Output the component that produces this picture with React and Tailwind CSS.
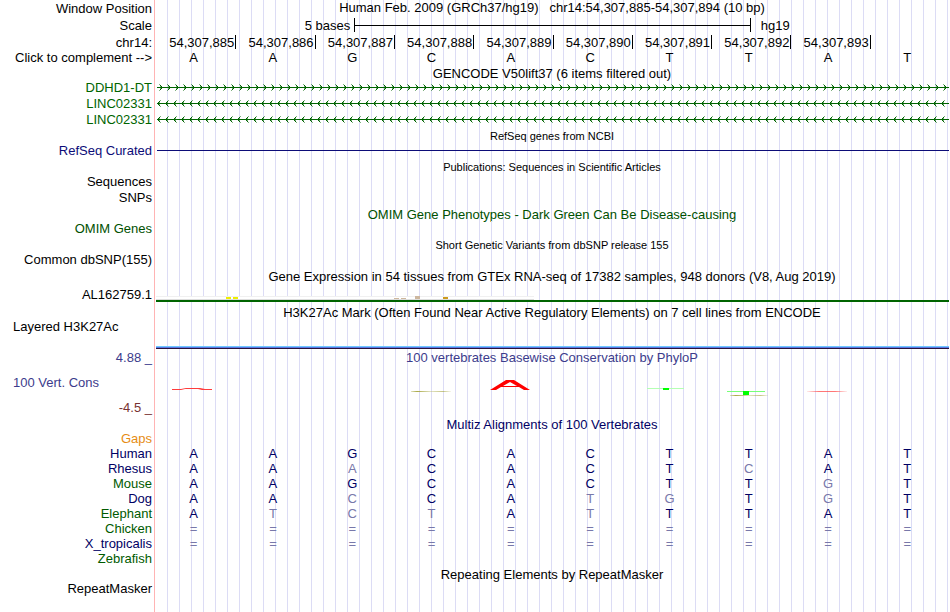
import React from "react";

const POSITIONS = [
  "54,307,885",
  "54,307,886",
  "54,307,887",
  "54,307,888",
  "54,307,889",
  "54,307,890",
  "54,307,891",
  "54,307,892",
  "54,307,893",
];

// lower case = base differs from human, drawn lighter
const SPECIES = [
  { name: "Human", color: "text-[#000064]", bases: "AAGCACTTAT" },
  { name: "Rhesus", color: "text-[#000064]", bases: "AAaCACTcAT" },
  { name: "Mouse", color: "text-[#005a00]", bases: "AAGCACTTgT" },
  { name: "Dog", color: "text-[#000064]", bases: "AAcCAtgTgT" },
  { name: "Elephant", color: "text-[#005a00]", bases: "AtctAtTTAT" },
  { name: "Chicken", color: "text-[#005a00]", bases: "==========" },
  { name: "X_tropicalis", color: "text-[#000064]", bases: "==========" },
];

/* One browser line: label on the left, track area on the right */
const Row = ({ label, color = "text-black", height, children }) => (
  <div className={`flex ${height}`}>
    <div className={`w-[154px] shrink-0 pr-0.5 text-right ${color}`}>
      {label}
    </div>
    <div className="min-w-0 flex-1 border-l border-[#ffb4b4] pl-px">
      <div className="h-full bg-[repeating-linear-gradient(to_right,transparent_0_11px,#dcdcf5_11px_12px)]">
        {children}
      </div>
    </div>
  </div>
);

const Title = ({ children, color = "text-black", size = "text-[13px]", height }) => (
  <Row height={height}>
    <h2 className={`pr-0.5 text-center leading-4 ${size} ${color}`}>{children}</h2>
  </Row>
);

const Bases = ({ bases, color = "text-black" }) => (
  <div className="grid grid-cols-10 pl-px">
    {bases.split("").map((b, i) => (
      <span
        key={i}
        className={`pr-1.5 text-center ${
          b === b.toUpperCase() && b !== "=" ? color : "text-[#7878aa]"
        }`}
      >
        {b.toUpperCase()}
      </span>
    ))}
  </div>
);

/* Intron line with strand chevrons every 8px */
const Strand = ({ id, reverse }) => (
  <svg className="block h-[15px] w-full px-px" shapeRendering="crispEdges">
    <defs>
      <pattern id={id} width="8" height="15" patternUnits="userSpaceOnUse">
        {reverse ? (
          <>
            <path d="M0 7h1v1h-1zM1 6h1v1h-1zM1 8h1v1h-1zM2 5h1v1h-1zM2 9h1v1h-1z" fill="#006400" />
            <path d="M3 4h1v1h-1zM3 10h1v1h-1zM2 6h1v1h-1zM2 8h1v1h-1z" fill="#006400" fillOpacity=".5" />
          </>
        ) : (
          <>
            <path d="M5 7h1v1h-1zM4 6h1v1h-1zM4 8h1v1h-1zM3 5h1v1h-1zM3 9h1v1h-1z" fill="#006400" />
            <path d="M2 4h1v1h-1zM2 10h1v1h-1zM3 6h1v1h-1zM3 8h1v1h-1z" fill="#006400" fillOpacity=".5" />
          </>
        )}
      </pattern>
    </defs>
    <rect width="100%" height="15" fill={`url(#${id})`} />
    <rect y="7" width="100%" height="1" fill="#006400" />
  </svg>
);

const Expression = () => (
  <div className="pr-px pt-[9px]">
    <svg className="block" width="378" height="4" shapeRendering="crispEdges">
      <rect width="378" height="4" fill="#fff" />
      <rect width="378" height="1" fill="#f0f0f0" />
      <rect y="3" width="378" height="1" fill="#dcdcdc" />
      <path d="M70 1h5v2h-5zM77 1h5v2h-5z" fill="#eeee00" />
      <path d="M238 2h5v1h-5zM245 2h5v1h-5zM259 0h5v3h-5z" fill="#cdb79e" />
      <path d="M287 1h5v2h-5z" fill="#cd9b1d" />
    </svg>
    <div className="h-0.5 bg-[#006400]" />
  </div>
);

/* Sequence logo scaled by the phyloP score */
const Conservation = () => (
  <svg className="block h-8 w-full" viewBox="0 0 794 32" preserveAspectRatio="none">
    <defs>
      <linearGradient id="fade-red">
        <stop offset="0" stopColor="#ff3c3c" stopOpacity=".1" />
        <stop offset=".3" stopColor="#ff3c3c" stopOpacity=".7" />
        <stop offset=".7" stopColor="#ff3c3c" stopOpacity=".7" />
        <stop offset="1" stopColor="#ff3c3c" stopOpacity=".1" />
      </linearGradient>
      <linearGradient id="fade-olive">
        <stop offset="0" stopColor="#a0a032" stopOpacity=".3" />
        <stop offset=".15" stopColor="#a0a032" stopOpacity=".9" />
        <stop offset=".5" stopColor="#a0a032" stopOpacity=".3" />
        <stop offset=".8" stopColor="#a0a032" stopOpacity=".6" />
        <stop offset="1" stopColor="#a0a032" stopOpacity=".1" />
      </linearGradient>
    </defs>
    <path d="M16 16h9l5-1h14l5 1h7v1h-10l-4-1h-13l-4 1h-9z" fill="#ff3c3c" />
    <rect x="255" y="18" width="40" height="1" fill="url(#fade-olive)" />
    <path
      d="M334 17L350 7h8L374 17h-6l-5-3h-18l-5 3zM347 13h14l-7-4z"
      fill="#f00"
      fillRule="evenodd"
    />
    <rect x="491" y="15" width="37" height="1" fill="#b4ffb4" />
    <rect x="507" y="15" width="6" height="2" fill="#0f0" />
    <rect x="571" y="18" width="38" height="1" fill="#78ff78" />
    <rect x="574" y="22" width="38" height="1" fill="url(#fade-olive)" />
    <rect x="587" y="18" width="6" height="4" fill="#0f0" />
    <rect x="651" y="18" width="40" height="1" fill="url(#fade-red)" />
  </svg>
);

const App = () => (
  <main className="min-h-screen w-full overflow-hidden bg-white font-['Liberation_Sans',Arial,sans-serif] text-[13px] leading-4">
    {/* === Position and scale === */}
    <Row label={<div className="pt-px">Window Position</div>} height="h-[18px]">
      <h1 className="whitespace-pre pr-0.5 text-center">
        {"Human Feb. 2009 (GRCh37/hg19)   chr14:54,307,885-54,307,894 (10 bp)"}
      </h1>
    </Row>
    <Row label="Scale" height="h-[17px]">
      <div className="flex pr-px">
        <span className="w-1/4 pr-1 text-right">5 bases</span>
        <span className="flex h-3.5 w-1/2 items-center border-x border-black">
          <span className="h-px w-full bg-black" />
        </span>
        <span className="pl-2.5">hg19</span>
      </div>
    </Row>
    <Row label="chr14:" height="h-[15px]">
      <div className="grid grid-cols-10 pl-px">
        {POSITIONS.map((p) => (
          <span key={p} className="h-3.5 border-r border-black pr-px text-right">
            {p}
          </span>
        ))}
      </div>
    </Row>
    <Row
      label={<button className="block w-full text-right">Click to complement --&gt;</button>}
      height="h-4"
    >
      <Bases bases="AAGCACTTAT" />
    </Row>

    {/* === Genes === */}
    <Title height="h-3.5">GENCODE V50lift37 (6 items filtered out)</Title>
    <Row label="DDHD1-DT" color="text-[#006400]" height="h-4">
      <Strand id="ddhd1" />
    </Row>
    <Row label="LINC02331" color="text-[#006400]" height="h-4">
      <Strand id="linc-a" reverse />
    </Row>
    <Row label="LINC02331" color="text-[#006400]" height="h-4">
      <Strand id="linc-b" reverse />
    </Row>
    <Title size="text-[11px]" height="h-[15px]">RefSeq genes from NCBI</Title>
    <Row label="RefSeq Curated" color="text-[#0c0c78]" height="h-4">
      <div className="px-px pt-[7px]">
        <div className="h-px bg-[#0c0c78]" />
      </div>
    </Row>

    {/* === Publications and variants === */}
    <Title size="text-[11px]" height="h-[15px]">
      Publications: Sequences in Scientific Articles
    </Title>
    <Row label="Sequences" height="h-4" />
    <Row label="SNPs" height="h-[17px]" />
    <Title color="text-[#005000]" height="h-3.5">
      OMIM Gene Phenotypes - Dark Green Can Be Disease-causing
    </Title>
    <Row label="OMIM Genes" color="text-[#005000]" height="h-4" />
    <Title size="text-[11px]" height="h-[15px]">
      Short Genetic Variants from dbSNP release 155
    </Title>
    <Row label="Common dbSNP(155)" height="h-[17px]" />

    {/* === Expression and regulation === */}
    <Title height="h-[18px]">
      Gene Expression in 54 tissues from GTEx RNA-seq of 17382 samples, 948 donors (V8, Aug 2019)
    </Title>
    <Row label="AL162759.1" height="h-[18px]">
      <Expression />
    </Row>
    <Title height="h-3.5">
      H3K27Ac Mark (Often Found Near Active Regulatory Elements) on 7 cell lines from ENCODE
    </Title>
    <Row label={<div className="pl-[13px] text-left">Layered H3K27Ac</div>} height="h-[31px]">
      <div className="pr-px pt-[27px]">
        <div className="h-px bg-[#6ec8ff]" />
        <div className="h-px bg-[#5a78e6]" />
        <div className="h-px bg-[#28143c]" />
      </div>
    </Row>

    {/* === Conservation === */}
    <Row
      height="h-[67px]"
      label={
        <>
          <div className="h-[25px] text-[#3c3c8c]">4.88 _</div>
          <div className="h-[25px] pl-[13px] text-left text-[#3c3c8c]">100 Vert. Cons</div>
          <div className="text-[#783232]">-4.5 _</div>
        </>
      }
    >
      <h2 className="h-[23px] pr-0.5 text-center text-[#3c3c8c]">
        100 vertebrates Basewise Conservation by PhyloP
      </h2>
      <Conservation />
    </Row>
    <Title color="text-[#000064]" height="h-3.5">Multiz Alignments of 100 Vertebrates</Title>
    <Row label="Gaps" color="text-[#e68c14]" height="h-[15px]" />
    {SPECIES.map((s) => (
      <Row key={s.name} label={s.name} color={s.color} height="h-[15px]">
        <Bases bases={s.bases} color="text-[#000064]" />
      </Row>
    ))}
    <Row label="Zebrafish" color="text-[#005a00]" height="h-4" />

    {/* === Repeats === */}
    <Title height="h-3.5">Repeating Elements by RepeatMasker</Title>
    <Row label="RepeatMasker" height="h-[31px]" />
  </main>
);

export default App;
